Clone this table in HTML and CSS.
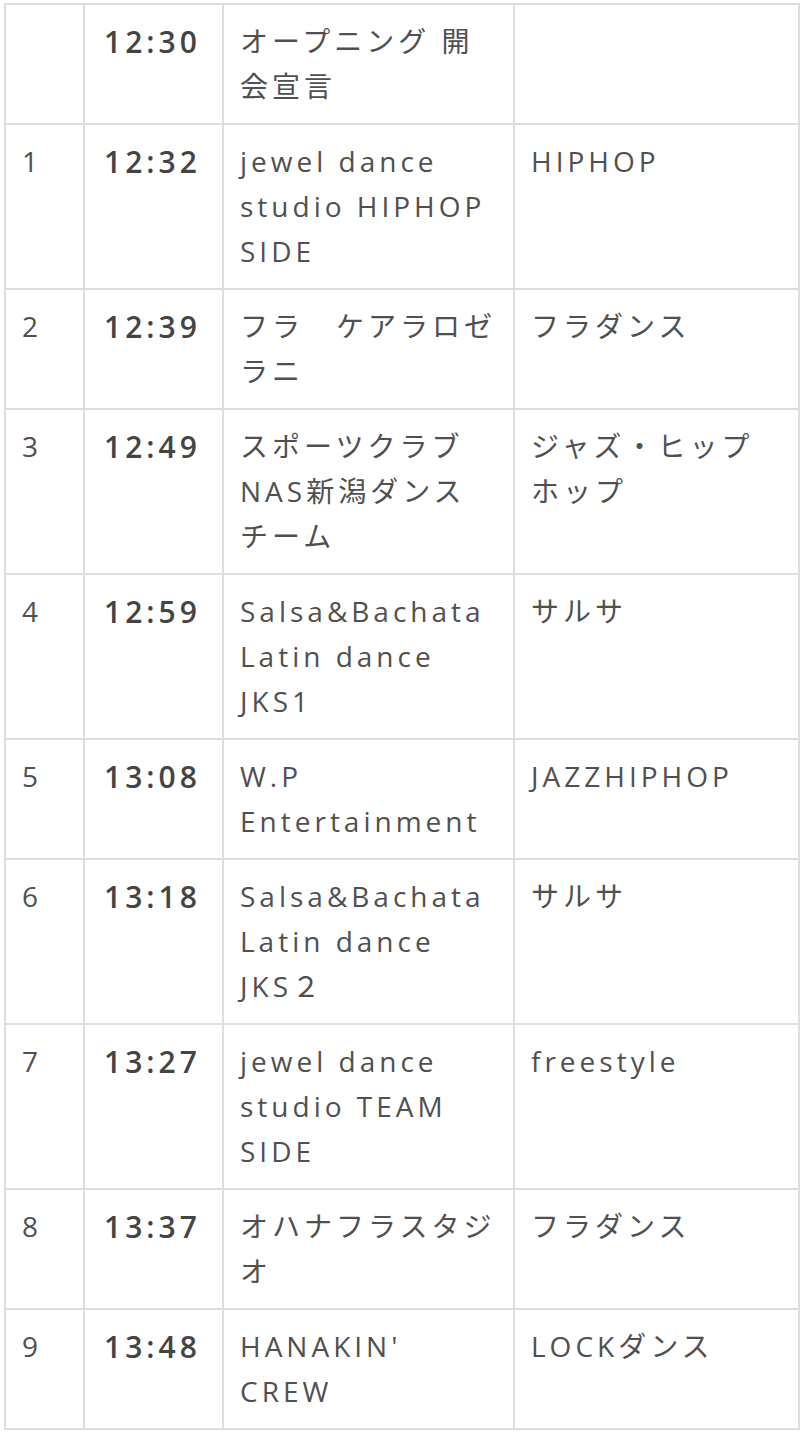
FILE: index.html
```html
<!DOCTYPE html>
<html lang="ja">
<head>
    <meta charset="UTF-8">
    <meta name="viewport" content="width=device-width, initial-scale=1.0">
    <title>タイムテーブル</title>
    <link rel="stylesheet" href="styles.css">
</head>
<body>
    <table class="timetable">
        <colgroup>
            <col class="col-no">
            <col class="col-time">
            <col class="col-team">
            <col class="col-genre">
        </colgroup>
        <tbody>
            <tr>
                <td></td>
                <td class="time">12:30</td>
                <td>オープニング 開会宣言</td>
                <td></td>
            </tr>
            <tr>
                <td>1</td>
                <td class="time">12:32</td>
                <td>jewel dance studio HIPHOP SIDE</td>
                <td>HIPHOP</td>
            </tr>
            <tr>
                <td>2</td>
                <td class="time">12:39</td>
                <td>フラ　ケアラロゼラニ</td>
                <td>フラダンス</td>
            </tr>
            <tr>
                <td>3</td>
                <td class="time">12:49</td>
                <td>スポーツクラブ NAS新潟ダンスチーム</td>
                <td>ジャズ・ヒップホップ</td>
            </tr>
            <tr>
                <td>4</td>
                <td class="time">12:59</td>
                <td>Salsa&amp;Bachata Latin dance JKS1</td>
                <td>サルサ</td>
            </tr>
            <tr>
                <td>5</td>
                <td class="time">13:08</td>
                <td>W.P Entertainment</td>
                <td>JAZZHIPHOP</td>
            </tr>
            <tr>
                <td>6</td>
                <td class="time">13:18</td>
                <td>Salsa&amp;Bachata Latin dance JKS２</td>
                <td>サルサ</td>
            </tr>
            <tr>
                <td>7</td>
                <td class="time">13:27</td>
                <td>jewel dance studio TEAM SIDE</td>
                <td>freestyle</td>
            </tr>
            <tr>
                <td>8</td>
                <td class="time">13:37</td>
                <td>オハナフラスタジオ</td>
                <td>フラダンス</td>
            </tr>
            <tr>
                <td>9</td>
                <td class="time">13:48</td>
                <td>HANAKIN' CREW</td>
                <td>LOCKダンス</td>
            </tr>
        </tbody>
    </table>
</body>
</html>
```

FILE: styles.css
```css
body {
    margin: 0;
    background-color: #fff;
    font-family: "Open Sans", "Noto Sans CJK JP", sans-serif;
    color: #505050;
    overflow: hidden;
}

.timetable {
    border-collapse: collapse;
    table-layout: fixed;
    width: 794px;
    margin: 3px 0 0 4px;
    font-size: 28px;
    line-height: 45px;
    letter-spacing: 4px;
}

.col-no {
    width: 79px;
}

.col-time {
    width: 139px;
}

.col-team {
    width: 291px;
}

.col-genre {
    width: 285px;
}

.timetable td {
    border: 2px solid #dedede;
    padding: 14px 16px;
    vertical-align: top;
    word-wrap: break-word;
}

.timetable td.time {
    font-size: 30px;
    font-weight: 600;
    padding-left: 19px;
    padding-right: 8px;
    color: #444;
}
```
